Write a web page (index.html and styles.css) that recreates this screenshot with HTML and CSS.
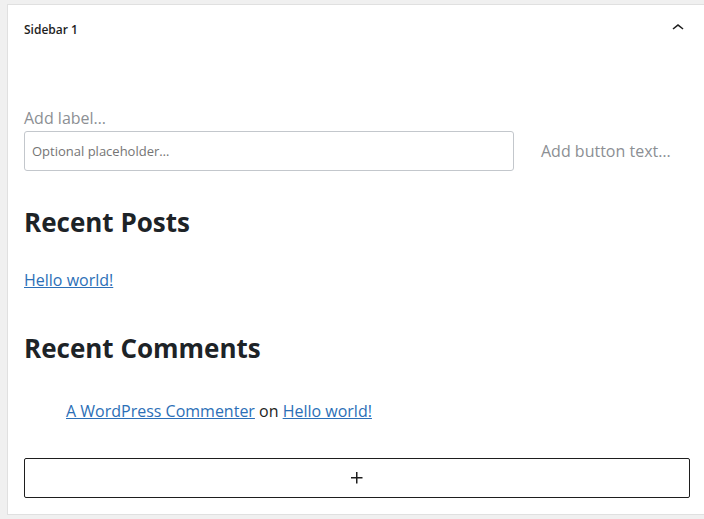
FILE: index.html
```html
<!DOCTYPE html>
<html lang="en">
<head>
    <meta charset="UTF-8">
    <meta name="viewport" content="width=device-width, initial-scale=1.0">
    <title>Widgets - Sidebar 1</title>
    <link rel="stylesheet" href="styles.css">
</head>
<body>
    <div class="widget-area">
        <div class="widget-area-header">
            <span class="widget-area-title">Sidebar 1</span>
            <svg class="chevron" width="24" height="24" viewBox="0 0 24 24" aria-hidden="true">
                <path d="M6.5 12.4L12 8l5.5 4.4-.9 1.2L12 10l-4.5 3.6-1-1.2z"></path>
            </svg>
        </div>

        <div class="search-block">
            <div class="search-label">Add label…</div>
            <div class="search-row">
                <input type="text" class="search-input" placeholder="Optional placeholder…">
                <div class="search-button">Add button text…</div>
            </div>
        </div>

        <h2 class="widget-title">Recent Posts</h2>
        <ul class="latest-posts">
            <li><a href="#">Hello world!</a></li>
        </ul>

        <h2 class="widget-title">Recent Comments</h2>
        <ol class="latest-comments">
            <li><a href="#">A WordPress Commenter</a> on <a href="#">Hello world!</a></li>
        </ol>

        <button class="block-appender" type="button" aria-label="Add block">
            <svg width="24" height="24" viewBox="0 0 24 24" aria-hidden="true">
                <path d="M11 12.5V17.5H12.5V12.5H17.5V11H12.5V6H11V11H6V12.5H11Z"></path>
            </svg>
        </button>
    </div>
</body>
</html>
```

FILE: styles.css
```css
* {
    margin: 0;
    padding: 0;
    box-sizing: border-box;
}

body {
    font-family: 'Open Sans', 'Noto Sans', sans-serif;
    background: #f0f0f0;
    color: #1e1e1e;
    overflow: hidden;
}

.widget-area {
    background: #fff;
    margin: 4px 0 0 7px;
    border: 1px solid #e0e0e0;
    border-right: none;
    padding: 0 14px 16px 16px;
}

.widget-area-header {
    display: flex;
    align-items: center;
    justify-content: space-between;
    height: 48px;
}

.widget-area-title {
    font-size: 12px;
    font-weight: 600;
    color: #1e1e1e;
}

.chevron {
    fill: #1e1e1e;
    margin-top: -2px;
}

.search-block {
    margin-top: 53px;
}

.search-label {
    font-size: 16px;
    line-height: 24px;
    color: #8c8f94;
    margin-bottom: 1px;
}

.search-row {
    display: flex;
    align-items: center;
}

.search-input {
    flex: 1;
    height: 40px;
    border: 1px solid #c3c7cc;
    border-radius: 3px;
    padding: 0 7px;
    font-family: inherit;
    font-size: 13px;
    color: #1e1e1e;
}

.search-input::placeholder {
    color: #757575;
}

.search-button {
    width: 176px;
    padding-left: 27px;
    font-size: 16px;
    color: #8c8f94;
    white-space: nowrap;
}

.widget-title {
    font-size: 26px;
    font-weight: 700;
    line-height: 34px;
    color: #1d2327;
    margin-top: 34px;
}

.latest-posts {
    list-style: none;
    margin-top: 29px;
    font-size: 16px;
    line-height: 24px;
}

.latest-posts + .widget-title {
    margin-top: 39px;
}

.latest-comments {
    list-style: none;
    margin-top: 34px;
    padding-left: 42px;
    font-size: 16px;
    line-height: 24px;
}

a {
    color: #2c6fb7;
    text-decoration: underline;
}

.block-appender {
    display: flex;
    align-items: center;
    justify-content: center;
    width: 100%;
    height: 40px;
    margin-top: 35px;
    background: #fff;
    border: 1px solid #1e1e1e;
    border-radius: 2px;
    cursor: pointer;
}

.block-appender svg {
    fill: #1e1e1e;
}
```
